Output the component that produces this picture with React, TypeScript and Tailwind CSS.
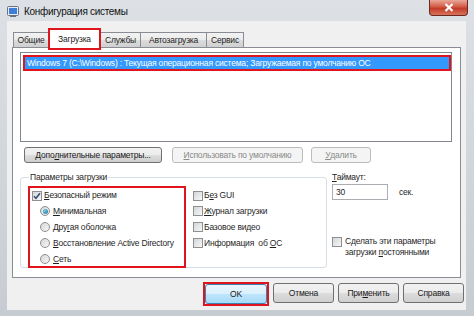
import React from 'react';
import clsx from 'clsx';

function Check({ checked = false }: { checked?: boolean }) {
  return (
    <span className="flex h-[10px] w-[10px] shrink-0 items-center justify-center border border-[#8f8f8f] bg-[linear-gradient(135deg,#d3d6da,#f7f7f7)]">
      {checked && (
        <svg width="8" height="8" viewBox="0 0 8 8">
          <path d="M1 4.2 L3 6.3 L7 1.2" fill="none" stroke="#3b4f78" strokeWidth="1.6" />
        </svg>
      )}
    </span>
  );
}

function Radio({ checked = false }: { checked?: boolean }) {
  return (
    <span className="flex h-[10px] w-[10px] shrink-0 items-center justify-center rounded-full border border-[#8f8f8f] bg-[linear-gradient(135deg,#d3d6da,#f7f7f7)]">
      {checked && <span className="h-[5px] w-[5px] rounded-full bg-[radial-gradient(circle_at_35%_35%,#6fd0e8,#1b6d96)]" />}
    </span>
  );
}

function Btn({
  children,
  className,
  disabled,
  primary,
}: {
  children: React.ReactNode;
  className?: string;
  disabled?: boolean;
  primary?: boolean;
}) {
  return (
    <div
      className={clsx(
        'flex items-center justify-center whitespace-nowrap rounded-[3px] border leading-[12px]',
        disabled
          ? 'border-[#b9bdc0] bg-[#f4f4f4] text-[#8a8a8a]'
          : primary
            ? 'border-[#3c7fb1] bg-[linear-gradient(#eaf6fd,#d9f0fc_50%,#bee6fd_50%,#a7d9f5)] text-[#1a1a1a]'
            : 'border-[#707070] bg-[linear-gradient(#f2f2f2,#ebebeb_50%,#dddddd_50%,#cfcfcf)] text-[#1a1a1a]',
        className
      )}
    >
      {children}
    </div>
  );
}

function Tab({ label, className }: { label: string; className?: string }) {
  return (
    <div
      className={clsx(
        '-ml-px flex h-[15px] items-center justify-center border border-b-0 border-[#898c95] bg-[linear-gradient(#f2f2f2,#ebebeb_50%,#dddddd_50%,#cfcfcf)]',
        className
      )}
    >
      {label}
    </div>
  );
}

export default function App() {
  return (
    <div className="flex h-[316px] w-[474px] flex-col overflow-hidden whitespace-nowrap bg-[linear-gradient(#dde1e5,#c6ccd2)] font-['Liberation_Sans',sans-serif] text-[8.5px] tracking-[-0.2px] text-[#1f1f1f]">
      {/* Title bar */}
      <div className="flex h-[21px] shrink-0 items-start">
        <svg className="ml-[7px] mt-[6px]" width="12" height="11" viewBox="0 0 12 11">
          <rect x="0.5" y="0.5" width="11" height="9" rx="1" fill="#e8ecf0" stroke="#6a7380" />
          <rect x="2" y="2" width="8" height="6" fill="#3d7fd6" />
          <rect x="3" y="9.5" width="6" height="1.5" fill="#6a7380" />
        </svg>
        <span className="ml-[5px] mt-[6px] text-[10px] leading-[12px] tracking-[-0.3px] text-[#111]">Конфигурация системы</span>
        <div className="ml-auto mr-[6px] flex h-[16px] w-[39px] items-center justify-center rounded-b-[4px] border border-t-0 border-[#6b2a20] bg-[linear-gradient(#e9a898,#d35a45_45%,#c23b28_55%,#d9735a)]">
          <svg width="10" height="9" viewBox="0 0 10 9">
            <path d="M1.5 1 L8.5 8 M8.5 1 L1.5 8" stroke="#fff" strokeWidth="2.2" />
          </svg>
        </div>
      </div>

      {/* Client area */}
      <div className="ml-[7px] flex h-[289px] w-[459px] flex-col bg-[#f0f0f0]">
        {/* Tabs */}
        <div className="ml-[6px] mt-[7px] flex h-[19px] items-end">
          <Tab label="Общие" className="ml-0 w-[36px]" />
          <div className="relative z-10 -mb-[3px] -ml-px flex h-[22px] w-[53px] border-2 border-[#e0141c] bg-white">
            <div className="flex w-full items-center justify-center">Загрузка</div>
          </div>
          <Tab label="Службы" className="w-[41px]" />
          <Tab label="Автозагрузка" className="w-[67px]" />
          <Tab label="Сервис" className="w-[38px]" />
        </div>

        {/* Panel */}
        <div className="ml-[5px] h-[231px] w-[449px] border border-[#898c95] bg-white">
          {/* OS list */}
          <div className="ml-[7px] mt-[4px] h-[90px] w-[432px] border border-[#828790] bg-white">
            <div className="ml-[2px] mt-[2px] h-[16px] w-[428px] border-2 border-[#e0141c]">
              <div className="h-full bg-[#3399ff] pl-[2px] leading-[12px] text-white">
                Windows 7 (C:\Windows) : Текущая операционная система; Загружаемая по умолчанию ОС
              </div>
            </div>
          </div>

          {/* List buttons */}
          <div className="ml-[11px] mt-[5px] flex">
            <Btn className="h-[16px] w-[138px]">
              Допо<span className="underline">л</span>нительные параметры...
            </Btn>
            <Btn disabled className="ml-[10px] h-[16px] w-[131px]">
              <span className="underline">И</span>спользовать по умолчанию
            </Btn>
            <Btn disabled className="ml-[8px] h-[16px] w-[60px]">
              <span className="underline">У</span>далить
            </Btn>
          </div>

          {/* Boot options */}
          <div className="mt-[8px] flex">
            <fieldset className="ml-[7px] h-[97px] w-[307px] rounded-[3px] border border-[#d5dfe5]">
              <legend className="ml-[8px] px-[1px] leading-[12px]">Параметры загрузки</legend>
              <div className="flex">
                <div className="ml-[7px] mt-[3px] h-[82px] w-[158px] border-2 border-[#e0141c]">
                  <div className="flex h-[15px] items-center gap-[2px] pl-[2px]">
                    <Check checked />
                    <span>
                      <span className="underline">Б</span>езопасный режим
                    </span>
                  </div>
                  <div className="flex h-[16px] items-center gap-[3px] pl-[10px]">
                    <Radio checked />
                    <span>
                      <span className="underline">М</span>инимальная
                    </span>
                  </div>
                  <div className="flex h-[16px] items-center gap-[3px] pl-[10px]">
                    <Radio />
                    <span>
                      Дру<span className="underline">г</span>ая оболочка
                    </span>
                  </div>
                  <div className="flex h-[16px] items-center gap-[3px] pl-[10px]">
                    <Radio />
                    <span>
                      <span className="underline">В</span>осстановление Active Directory
                    </span>
                  </div>
                  <div className="flex h-[16px] items-center gap-[3px] pl-[10px]">
                    <Radio />
                    <span>
                      <span className="underline">С</span>еть
                    </span>
                  </div>
                </div>
                <div className="ml-[7px] mt-[5px]">
                  <div className="flex h-[15px] items-center gap-[1px]">
                    <Check />
                    <span>
                      Б<span className="underline">е</span>з GUI
                    </span>
                  </div>
                  <div className="flex h-[16px] items-center gap-[1px]">
                    <Check />
                    <span>
                      <span className="underline">Ж</span>урнал загрузки
                    </span>
                  </div>
                  <div className="flex h-[16px] items-center gap-[1px]">
                    <Check />
                    <span>Базовое видео</span>
                  </div>
                  <div className="flex h-[16px] items-center gap-[1px]">
                    <Check />
                    <span>
                      Информация&nbsp; об <span className="underline">О</span>С
                    </span>
                  </div>
                </div>
              </div>
            </fieldset>

            {/* Timeout */}
            <div className="ml-[5px] flex flex-col">
              <span className="leading-[12px]">
                <span className="underline">Т</span>аймаут:
              </span>
              <div className="mt-[1px] flex items-end">
                <div className="flex h-[16px] w-[56px] items-center border border-[#abadb3] bg-white pl-[3px]">30</div>
                <span className="mb-[1px] ml-[11px]">сек.</span>
              </div>
              <div className="mt-[36px] flex items-start gap-[3px]">
                <span className="mt-[1px]">
                  <Check />
                </span>
                <span className="leading-[11px]">
                  Сделать эти параметры
                  <br />
                  загрузки <span className="underline">п</span>остоянными
                </span>
              </div>
            </div>
          </div>
        </div>

        {/* Dialog buttons */}
        <div className="mt-[4px] flex items-start justify-end gap-[4px] pr-[2px]">
          <div className="h-[24px] w-[66px] border-2 border-[#e0141c]">
            <Btn primary className="h-[20px] w-full">
              OK
            </Btn>
          </div>
          <Btn className="mt-px h-[20px] w-[61px]">Отмена</Btn>
          <Btn className="mt-px h-[20px] w-[61px]">
            При<span className="underline">м</span>енить
          </Btn>
          <Btn className="mt-px h-[20px] w-[61px]">Справка</Btn>
        </div>
      </div>
    </div>
  );
}
